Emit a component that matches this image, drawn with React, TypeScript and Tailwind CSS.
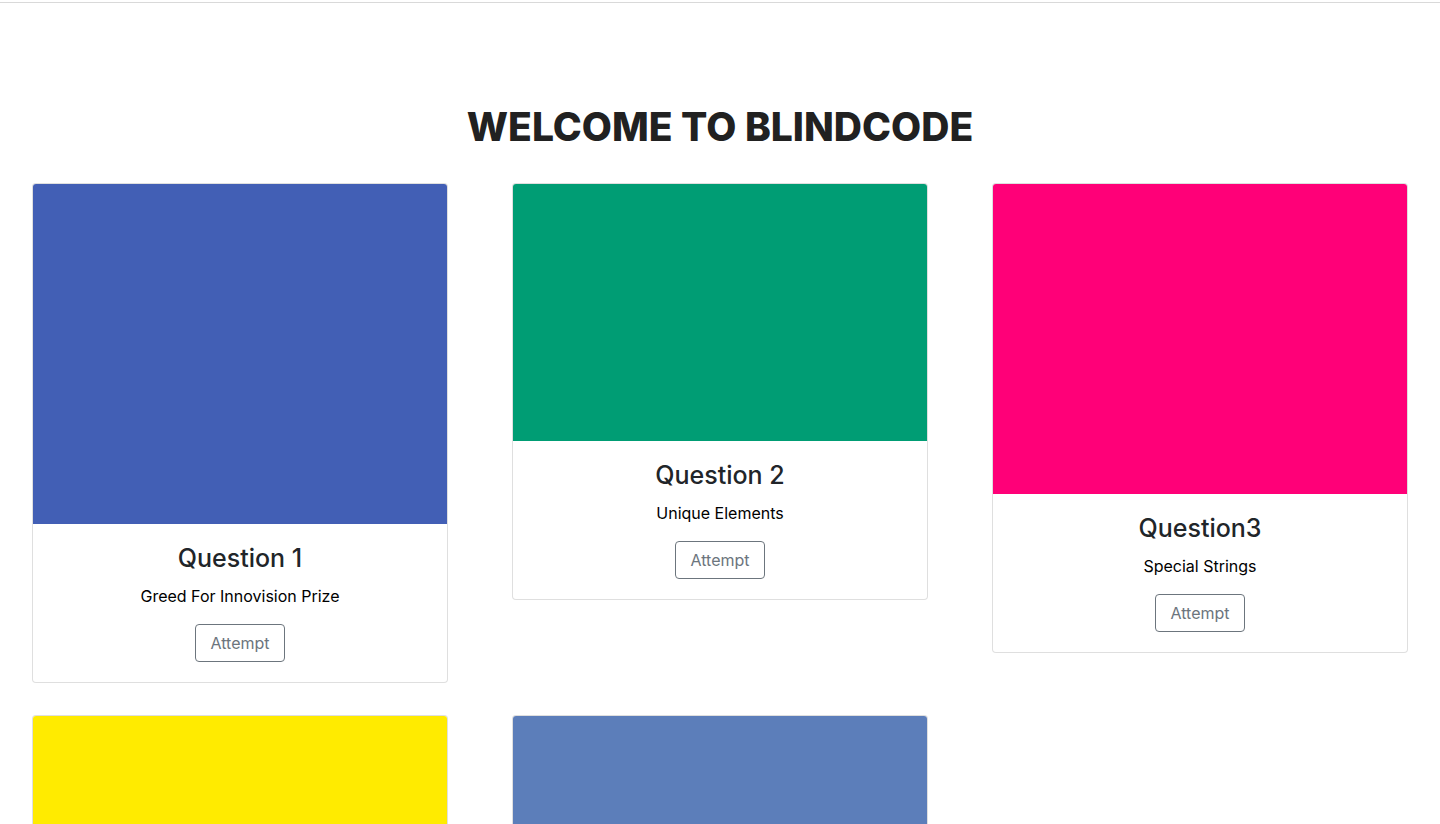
import React from "react";

const questions = [
  { title: "Question 1", desc: "Greed For Innovision Prize", color: "bg-[#425fb5]", h: "h-[340px]" },
  { title: "Question 2", desc: "Unique Elements", color: "bg-[#009d74]", h: "h-[257px]" },
  { title: "Question3", desc: "Special Strings", color: "bg-[#ff0078]", h: "h-[310px]" },
  { title: "Question 4", desc: "Matrix Paths", color: "bg-[#ffeb00]", h: "h-[340px]" },
  { title: "Question 5", desc: "Binary Search", color: "bg-[#5c7eba]", h: "h-[340px]" },
];

const Card = ({ q }: { q: (typeof questions)[number] }) => {
  return (
    <div className="border border-[rgba(0,0,0,0.125)] rounded-[4px] overflow-hidden bg-white">
      <div className={`${q.h} ${q.color}`} />
      <div className="p-5 flex flex-col items-center text-center">
        <h5 className="text-[25px] leading-[28px] font-medium text-[#212529] mb-3">{q.title}</h5>
        <p className="text-[16px] leading-6 text-black mb-4">{q.desc}</p>
        <button className="border border-[#6c757d] text-[#6c757d] rounded-[4px] px-[14px] h-[38px] text-[16px]">
          Attempt
        </button>
      </div>
    </div>
  );
};

export default function App() {
  return (
    <main className="min-h-screen bg-white font-['Inter',_'Open_Sans',_sans-serif]">
      <div className="h-[3px] border-b border-[#d9d9d9]" />
      <div className="px-8 pt-[100px]">
        <h1 className="text-center text-[39px] leading-[48px] font-extrabold text-[#212121] mb-8">
          WELCOME TO BLINDCODE
        </h1>
        <div className="grid grid-cols-3 gap-x-16 gap-y-8 items-start">
          {questions.map((q) => (
            <Card key={q.title} q={q} />
          ))}
        </div>
      </div>
    </main>
  );
}
